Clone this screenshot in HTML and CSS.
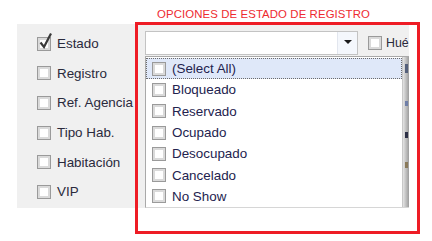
FILE: index.html
```html
<!DOCTYPE html>
<html lang="es">

<head>
    <meta charset="UTF-8">
    <meta name="viewport" content="width=device-width, initial-scale=1.0">
    <title>Opciones de estado de registro</title>
    <link rel="stylesheet" href="styles.css">
</head>

<body>
    <div class="page">
        <div class="caption">OPCIONES DE ESTADO DE REGISTRO</div>

        <div class="panel">
            <div class="filters">
                <div class="opt">
                    <span class="box checked">
                        <svg width="15" height="18" viewBox="0 0 15 18">
                            <path d="M2.5 10.5 L6 15 L13 1.5" fill="none" stroke="#3a3a3a" stroke-width="2.2" />
                        </svg>
                    </span>
                    <span>Estado</span>
                </div>
                <div class="opt"><span class="box"></span><span>Registro</span></div>
                <div class="opt"><span class="box"></span><span>Ref. Agencia</span></div>
                <div class="opt"><span class="box"></span><span>Tipo Hab.</span></div>
                <div class="opt"><span class="box"></span><span>Habitación</span></div>
                <div class="opt"><span class="box"></span><span>VIP</span><span class="box hidden-box"></span></div>
            </div>

            <div class="top-row">
                <div class="combo">
                    <div class="combo-text"></div>
                    <div class="combo-btn"><span class="arrow"></span></div>
                </div>
                <div class="opt small"><span class="box"></span><span>Hué</span></div>
            </div>

            <!-- lista desplegada del combo -->
            <div class="dropdown">
                <ul class="items">
                    <li class="item selected"><span class="box"></span>(Select All)</li>
                    <li class="item"><span class="box"></span>Bloqueado</li>
                    <li class="item"><span class="box"></span>Reservado</li>
                    <li class="item"><span class="box"></span>Ocupado</li>
                    <li class="item"><span class="box"></span>Desocupado</li>
                    <li class="item"><span class="box"></span>Cancelado</li>
                    <li class="item"><span class="box"></span>No Show</li>
                </ul>
                <div class="edge">
                    <span class="bit b1"></span>
                    <span class="bit b2"></span>
                    <span class="bit b3"></span>
                    <span class="bit b4"></span>
                </div>
            </div>
        </div>

        <div class="frame"></div>
    </div>
</body>

</html>
```

FILE: styles.css
```css
body {
    margin: 0;
    background: #ffffff;
    font-family: "Liberation Sans", Arial, sans-serif;
}

.page {
    position: relative;
    width: 432px;
    height: 241px;
}

.caption {
    height: 24px;
    box-sizing: border-box;
    padding: 7px 0 0 157px;
    font-size: 11.4px;
    line-height: 14px;
    color: #ee2a30;
    letter-spacing: 0.1px;
}

.panel {
    position: relative;
    margin-left: 17px;
    width: 392px;
    height: 184px;
    background: #f0f0f0;
    overflow: hidden;
}

.filters {
    padding: 5px 0 0 20px;
}

.opt {
    display: flex;
    align-items: center;
    height: 29.6px;
    font-size: 13.4px;
    color: #2a2a3c;
}

.box {
    position: relative;
    flex: none;
    width: 14px;
    height: 14px;
    margin-right: 6px;
    box-sizing: border-box;
    border: 1px solid #9a9a9a;
    background: #ffffff;
    box-shadow: inset 0 0 0 2px #dadada;
}

.box svg {
    position: absolute;
    left: 0;
    top: -6px;
}

.hidden-box {
    margin-left: 82px;
}

.top-row {
    position: absolute;
    left: 128px;
    top: 7px;
    display: flex;
    align-items: center;
    gap: 10px;
}

.combo {
    display: flex;
    width: 213px;
    height: 24px;
    box-sizing: border-box;
    border: 1px solid #c3c3c3;
    background: #ffffff;
}

.combo-text {
    flex: 1;
}

.combo-btn {
    width: 19px;
    display: flex;
    align-items: center;
    justify-content: center;
    border-left: 1px solid #e2e6ee;
    background: #f4f7fc;
}

.arrow {
    width: 0;
    height: 0;
    margin-top: -2px;
    border-left: 4px solid transparent;
    border-right: 4px solid transparent;
    border-top: 4px solid #1a1a1a;
}

.top-row .opt {
    height: auto;
    font-size: 12.4px;
}

.top-row .box {
    margin-right: 4px;
}

.dropdown {
    position: absolute;
    left: 128px;
    top: 32px;
    width: 264px;
    height: 152px;
    display: flex;
    box-sizing: border-box;
    border-left: 1px solid #a9a9a9;
    border-top: 1px solid #a9a9a9;
    border-bottom: 1px solid #d6d6d6;
    background: #ffffff;
}

.items {
    flex: 1;
    margin: 0;
    padding: 1px 0 0 0;
    list-style: none;
}

.item {
    display: flex;
    align-items: center;
    height: 21.3px;
    box-sizing: border-box;
    padding-left: 6px;
    font-size: 13.4px;
    color: #23234e;
}

.item .box {
    margin-right: 6px;
}

.item.selected {
    background: #dfe8f9;
    border: 1px dotted #6c6c6c;
    padding-left: 5px;
}

.edge {
    position: relative;
    width: 6px;
    border-left: 1px solid #c8c8c8;
    background: linear-gradient(to right, #e4e4e4, #b9b9b9 60%, #9c9c9c);
}

.bit {
    position: absolute;
    left: 2px;
    width: 3px;
}

.b1 {
    top: 7px;
    height: 9px;
    background: #55607a;
}

.b2 {
    top: 44px;
    height: 5px;
    background: #6f7fa8;
}

.b3 {
    top: 75px;
    height: 6px;
    background: #2c2f45;
}

.b4 {
    top: 105px;
    height: 6px;
    background: #8a7a5a;
}

.frame {
    position: absolute;
    left: 135px;
    top: 22px;
    width: 285px;
    height: 212px;
    box-sizing: border-box;
    border: 3px solid #ee1c25;
}
```
